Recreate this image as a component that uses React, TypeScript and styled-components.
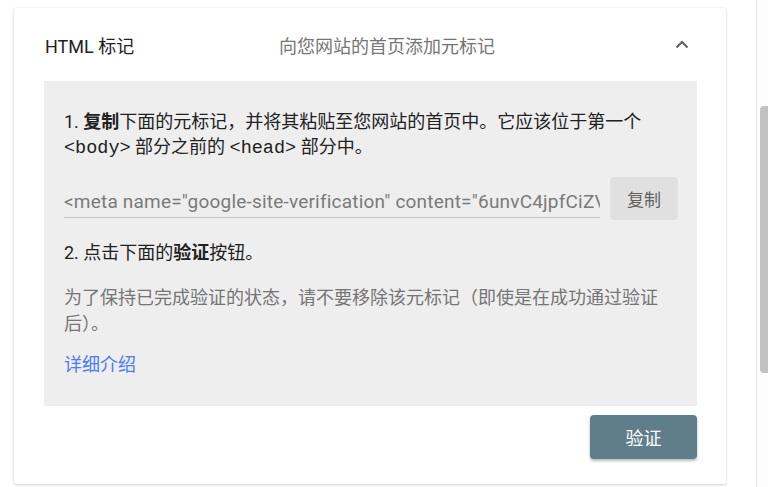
import React from "react"
import styled, { createGlobalStyle } from "styled-components"

const GlobalStyle = createGlobalStyle`
  html, body {
    margin: 0;
    padding: 0;
    background: #ffffff;
  }
  body {
    font-family: Roboto, "Noto Sans CJK SC", sans-serif;
    -webkit-font-smoothing: antialiased;
  }
`

const SPage = styled.div`
  display: flex;
  flex-direction: row;
  width: 784px;
  height: 487px;
  overflow: hidden;
`

const SMain = styled.div`
  width: 756px;
  padding: 8px 30px 0 14px;
  box-sizing: border-box;
`

const STrack = styled.div`
  width: 12px;
  border-left: 1px solid #e6e6e6;
  background: #fcfcfc;
  box-sizing: border-box;
  padding: 106px 0 0 3px;
`

const SThumb = styled.div`
  width: 8px;
  height: 267px;
  border-radius: 4px 0 0 4px;
  background: #c2c2c2;
`

const SCard = styled.div`
  background: #ffffff;
  box-shadow: 0 1px 3px rgba(0, 0, 0, 0.18), 0 0 1px rgba(0, 0, 0, 0.12);
  border-radius: 2px;
  height: 476px;
  display: flex;
  flex-direction: column;
`

const SHeader = styled.div`
  height: 73px;
  display: grid;
  grid-template-columns: 234px 1fr auto;
  align-items: center;
  padding: 0 37px 0 31px;
  box-sizing: border-box;
`

const STitle = styled.div`
  font-size: 18px;
  color: #212121;
`

const SSubtitle = styled.div`
  font-size: 18px;
  color: #757575;
`

const SChevron = styled.svg`
  width: 14px;
  height: 9px;
  display: block;
`

const SPanel = styled.div`
  margin: 0 29px 0 30px;
  padding: 28px 19px 28px 20px;
  background: #eeeeee;
  display: flex;
  flex-direction: column;
`

const SStep = styled.p<{ $top?: number }>`
  margin: ${(p) => p.$top ?? 0}px 0 0;
  font-size: 18px;
  line-height: 25px;
  color: #212121;
`

const SCode = styled.code`
  font-family: "Liberation Mono", "DejaVu Sans Mono", monospace;
  font-size: 18.5px;
`

const SHint = styled.p`
  margin: 20px 0 0;
  font-size: 18px;
  line-height: 26px;
  color: #757575;
`

const SLink = styled.a`
  margin-top: 15px;
  font-size: 18px;
  line-height: 26px;
  color: #4a7cf3;
  text-decoration: none;
`

const SCopyRow = styled.div`
  margin-top: 16px;
  display: flex;
  align-items: flex-end;
  gap: 10px;
`

const SInput = styled.input`
  flex: 1;
  min-width: 0;
  margin-bottom: 2px;
  padding: 0 0 3px;
  border: none;
  border-bottom: 1px solid #c4c4c4;
  background: transparent;
  font-family: Roboto, sans-serif;
  font-size: 19px;
  letter-spacing: 0.2px;
  line-height: 25px;
  color: #7a7a7a;
  outline: none;
`

const SCopyButton = styled.button`
  width: 68px;
  height: 43px;
  border: none;
  border-radius: 4px;
  background: #e0e0e0;
  color: #616161;
  font-family: Roboto, "Noto Sans CJK SC", sans-serif;
  font-size: 17px;
  cursor: pointer;
`

const SFooter = styled.div`
  display: flex;
  justify-content: flex-end;
  padding: 9px 29px 0 0;
`

const SVerifyButton = styled.button`
  width: 107px;
  height: 44px;
  border: none;
  border-radius: 4px;
  background: #607d8b;
  color: #ffffff;
  font-family: Roboto, "Noto Sans CJK SC", sans-serif;
  font-size: 18px;
  box-shadow: 0 2px 3px rgba(0, 0, 0, 0.28);
  cursor: pointer;
`

const META_TAG =
  '<meta name="google-site-verification" content="6unvC4jpfCiZVq8Xh3kT2mLr0bWdYs5nEaGoP1uJz7c" />'

export default function App() {
  return (
    <>
      <GlobalStyle />
      <SPage>
        <SMain>
          <SCard>
            <SHeader>
              <STitle>HTML 标记</STitle>
              <SSubtitle>向您网站的首页添加元标记</SSubtitle>
              <SChevron viewBox="0 0 14 9">
                <polyline
                  points="1.5,7.5 7,2 12.5,7.5"
                  fill="none"
                  stroke="#5f5f5f"
                  strokeWidth="2"
                />
              </SChevron>
            </SHeader>

            <SPanel>
              <SStep>
                1. <b>复制</b>下面的元标记，并将其粘贴至您网站的首页中。它应该位于第一个
                <SCode>&lt;body&gt;</SCode> 部分之前的 <SCode>&lt;head&gt;</SCode> 部分中。
              </SStep>

              <SCopyRow>
                <SInput readOnly value={META_TAG} />
                <SCopyButton>复制</SCopyButton>
              </SCopyRow>

              <SStep $top={20}>
                2. 点击下面的<b>验证</b>按钮。
              </SStep>

              <SHint>为了保持已完成验证的状态，请不要移除该元标记（即使是在成功通过验证后）。</SHint>

              <SLink href="#">详细介绍</SLink>
            </SPanel>

            <SFooter>
              <SVerifyButton>验证</SVerifyButton>
            </SFooter>
          </SCard>
        </SMain>
        <STrack>
          <SThumb />
        </STrack>
      </SPage>
    </>
  )
}
